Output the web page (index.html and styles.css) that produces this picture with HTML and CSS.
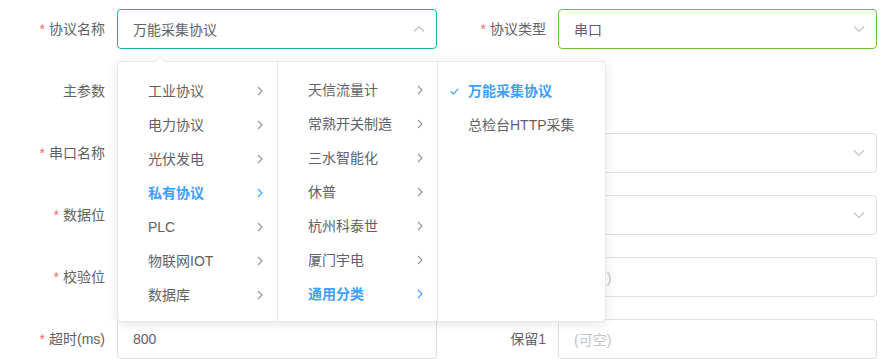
FILE: index.html
```html
<!DOCTYPE html>
<html lang="zh">
<head>
<meta charset="utf-8">
<link rel="stylesheet" href="styles.css">
</head>
<body>
<div class="form">
  <div class="row">
    <div class="item">
      <label class="label"><span class="req">*</span>协议名称</label>
      <div class="control focus"><span class="value">万能采集协议</span>
        <svg class="caret" width="12" height="8" viewBox="0 0 12 8"><path d="M1 6.5 L6 1.5 L11 6.5" fill="none" stroke="#C0C4CC" stroke-width="1.2"/></svg>
      </div>
    </div>
    <div class="item right">
      <label class="label"><span class="req">*</span>协议类型</label>
      <div class="control success"><span class="value">串口</span>
        <svg class="caret" width="12" height="8" viewBox="0 0 12 8"><path d="M1 1.5 L6 6.5 L11 1.5" fill="none" stroke="#C0C4CC" stroke-width="1.2"/></svg>
      </div>
    </div>
  </div>
  <div class="row">
    <div class="item">
      <label class="label">主参数</label>
      <div class="control blank"></div>
    </div>
    <div class="item right"></div>
  </div>
  <div class="row">
    <div class="item">
      <label class="label"><span class="req">*</span>串口名称</label>
      <div class="control">
        <svg class="caret" width="12" height="8" viewBox="0 0 12 8"><path d="M1 1.5 L6 6.5 L11 1.5" fill="none" stroke="#C0C4CC" stroke-width="1.2"/></svg>
      </div>
    </div>
    <div class="item right">
      <label class="label"><span class="req">*</span>波特率</label>
      <div class="control">
        <svg class="caret" width="12" height="8" viewBox="0 0 12 8"><path d="M1 1.5 L6 6.5 L11 1.5" fill="none" stroke="#C0C4CC" stroke-width="1.2"/></svg>
      </div>
    </div>
  </div>
  <div class="row">
    <div class="item">
      <label class="label"><span class="req">*</span>数据位</label>
      <div class="control">
        <svg class="caret" width="12" height="8" viewBox="0 0 12 8"><path d="M1 1.5 L6 6.5 L11 1.5" fill="none" stroke="#C0C4CC" stroke-width="1.2"/></svg>
      </div>
    </div>
    <div class="item right">
      <label class="label"><span class="req">*</span>停止位</label>
      <div class="control">
        <svg class="caret" width="12" height="8" viewBox="0 0 12 8"><path d="M1 1.5 L6 6.5 L11 1.5" fill="none" stroke="#C0C4CC" stroke-width="1.2"/></svg>
      </div>
    </div>
  </div>
  <div class="row">
    <div class="item">
      <label class="label"><span class="req">*</span>校验位</label>
      <div class="control"></div>
    </div>
    <div class="item right">
      <label class="label">地址</label>
      <div class="control"><span class="placeholder">(可空)</span></div>
    </div>
  </div>
  <div class="row">
    <div class="item">
      <label class="label"><span class="req">*</span>超时(ms)</label>
      <div class="control"><span class="value">800</span></div>
    </div>
    <div class="item right">
      <label class="label">保留1</label>
      <div class="control"><span class="placeholder">(可空)</span></div>
    </div>
  </div>
</div>

<div class="popper">
  <div class="arrow"></div>
  <div class="menus">
    <ul class="menu">
      <li class="node">工业协议<svg class="chev" width="6" height="10" viewBox="0 0 6 10"><path d="M1 1 L5 5 L1 9" fill="none" stroke="currentColor" stroke-width="1.1"/></svg></li>
      <li class="node">电力协议<svg class="chev" width="6" height="10" viewBox="0 0 6 10"><path d="M1 1 L5 5 L1 9" fill="none" stroke="currentColor" stroke-width="1.1"/></svg></li>
      <li class="node">光伏发电<svg class="chev" width="6" height="10" viewBox="0 0 6 10"><path d="M1 1 L5 5 L1 9" fill="none" stroke="currentColor" stroke-width="1.1"/></svg></li>
      <li class="node active">私有协议<svg class="chev" width="6" height="10" viewBox="0 0 6 10"><path d="M1 1 L5 5 L1 9" fill="none" stroke="currentColor" stroke-width="1.1"/></svg></li>
      <li class="node">PLC<svg class="chev" width="6" height="10" viewBox="0 0 6 10"><path d="M1 1 L5 5 L1 9" fill="none" stroke="currentColor" stroke-width="1.1"/></svg></li>
      <li class="node">物联网IOT<svg class="chev" width="6" height="10" viewBox="0 0 6 10"><path d="M1 1 L5 5 L1 9" fill="none" stroke="currentColor" stroke-width="1.1"/></svg></li>
      <li class="node">数据库<svg class="chev" width="6" height="10" viewBox="0 0 6 10"><path d="M1 1 L5 5 L1 9" fill="none" stroke="currentColor" stroke-width="1.1"/></svg></li>
    </ul>
    <ul class="menu shift">
      <li class="node">天信流量计<svg class="chev" width="6" height="10" viewBox="0 0 6 10"><path d="M1 1 L5 5 L1 9" fill="none" stroke="currentColor" stroke-width="1.1"/></svg></li>
      <li class="node">常熟开关制造<svg class="chev" width="6" height="10" viewBox="0 0 6 10"><path d="M1 1 L5 5 L1 9" fill="none" stroke="currentColor" stroke-width="1.1"/></svg></li>
      <li class="node">三水智能化<svg class="chev" width="6" height="10" viewBox="0 0 6 10"><path d="M1 1 L5 5 L1 9" fill="none" stroke="currentColor" stroke-width="1.1"/></svg></li>
      <li class="node">休普<svg class="chev" width="6" height="10" viewBox="0 0 6 10"><path d="M1 1 L5 5 L1 9" fill="none" stroke="currentColor" stroke-width="1.1"/></svg></li>
      <li class="node">杭州科泰世<svg class="chev" width="6" height="10" viewBox="0 0 6 10"><path d="M1 1 L5 5 L1 9" fill="none" stroke="currentColor" stroke-width="1.1"/></svg></li>
      <li class="node">厦门宇电<svg class="chev" width="6" height="10" viewBox="0 0 6 10"><path d="M1 1 L5 5 L1 9" fill="none" stroke="currentColor" stroke-width="1.1"/></svg></li>
      <li class="node active">通用分类<svg class="chev" width="6" height="10" viewBox="0 0 6 10"><path d="M1 1 L5 5 L1 9" fill="none" stroke="currentColor" stroke-width="1.1"/></svg></li>
    </ul>
    <ul class="menu last">
      <li class="node active"><svg class="check" width="9" height="7" viewBox="0 0 9 7"><path d="M0.7 3.4 L3.3 6 L8.3 0.8" fill="none" stroke="currentColor" stroke-width="1.1"/></svg>万能采集协议</li>
      <li class="node">总检台HTTP采集</li>
    </ul>
  </div>
</div>
</body>
</html>
```
FILE: styles.css
```css
* { box-sizing: border-box; }
html, body { margin: 0; padding: 0; background: #fff; }
body {
  width: 887px;
  height: 360px;
  overflow: hidden;
  position: relative;
  font-family: "Liberation Sans", "Noto Sans CJK SC", sans-serif;
  font-size: 14px;
  color: #606266;
}
.form {
  padding-top: 9px;
}
.row {
  display: flex;
  height: 40px;
  margin-bottom: 22px;
}
.row:last-child {
  margin-bottom: 0;
}
.item {
  display: flex;
  width: 437px;
}
.item.right {
  margin-left: 11px;
  width: 429px;
}
.label {
  width: 117px;
  flex: none;
  text-align: right;
  padding-right: 12px;
  line-height: 40px;
  color: #606266;
}
.item.right .label {
  width: 110px;
}
.req {
  color: #F56C6C;
  margin-right: 4px;
}
.control {
  flex: 1;
  height: 40px;
  border: 1px solid #DCDFE6;
  border-radius: 4px;
  display: flex;
  align-items: center;
  padding: 0 15px;
  position: relative;
}
.control.blank { border-color: transparent; }
.control.focus { border-color: #1AB3A1; }
.control.success { border-color: #67C23A; }
.value { color: #606266; }
.placeholder { color: #C0C4CC; }
.caret {
  margin-left: auto;
  margin-right: -4px;
}
.popper {
  position: absolute;
  left: 117px;
  top: 61px;
  width: 489px;
  height: 261px;
  background: #fff;
  border: 1px solid #E4E7ED;
  border-radius: 4px;
  box-shadow: 0 2px 12px 0 rgba(0, 0, 0, 0.1);
}
.arrow {
  position: absolute;
  left: 36px;
  top: -6px;
  width: 0;
  height: 0;
  border-left: 6px solid transparent;
  border-right: 6px solid transparent;
  border-bottom: 6px solid #E4E7ED;
}
.arrow::after {
  content: "";
  position: absolute;
  left: -5px;
  top: 1px;
  border-left: 5px solid transparent;
  border-right: 5px solid transparent;
  border-bottom: 5px solid #fff;
}
.menus {
  display: flex;
  height: 100%;
}
.menu {
  list-style: none;
  margin: 0;
  padding: 12px 0 0;
  width: 160px;
  border-right: 1px solid #E4E7ED;
}
.menu.shift { padding-top: 11px; }
.menu.last {
  width: 167px;
  border-right: none;
}
.node {
  position: relative;
  height: 34px;
  line-height: 34px;
  padding: 0 30px;
  color: #606266;
  white-space: nowrap;
}
.node.active {
  color: #409EFF;
  font-weight: bold;
}
.chev {
  position: absolute;
  right: 14px;
  top: 12px;
  color: #909399;
}
.node.active .chev { color: #409EFF; }
.check {
  position: absolute;
  left: 12px;
  top: 14px;
  color: #409EFF;
}
```
